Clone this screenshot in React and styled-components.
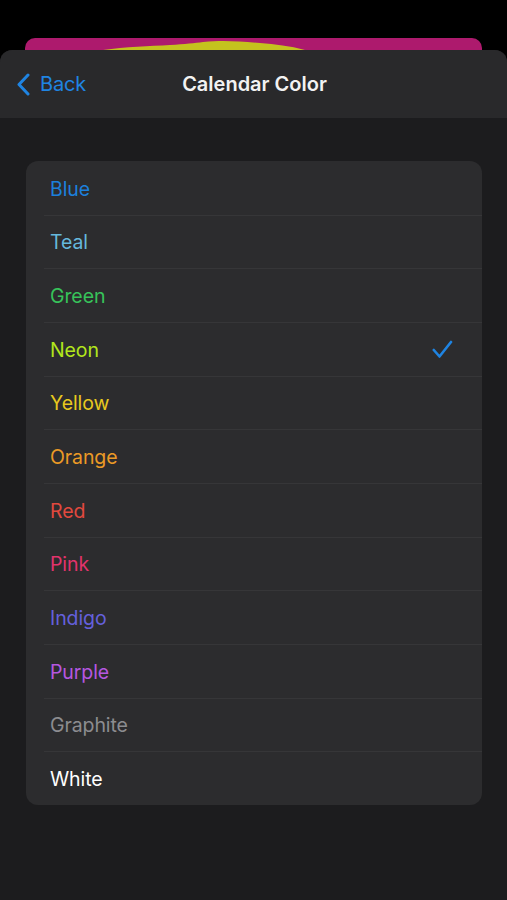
import React from "react";
import styled, { createGlobalStyle } from "styled-components";

const GlobalStyle = createGlobalStyle`
  html, body {
    margin: 0;
    padding: 0;
    background: #000;
  }
  body {
    font-family: Inter, "Noto Sans", "Liberation Sans", sans-serif;
    -webkit-font-smoothing: antialiased;
  }
`;

const colors = [
  { name: "Blue", color: "#1c80dc" },
  { name: "Teal", color: "#66b8dc" },
  { name: "Green", color: "#37c35a" },
  { name: "Neon", color: "#b2e61c", selected: true },
  { name: "Yellow", color: "#e8c81e" },
  { name: "Orange", color: "#eb9a26" },
  { name: "Red", color: "#e2493e" },
  { name: "Pink", color: "#e2336c" },
  { name: "Indigo", color: "#6560dc" },
  { name: "Purple", color: "#b657e0" },
  { name: "Graphite", color: "#8c8c90" },
  { name: "White", color: "#ffffff" },
];

const Screen = styled.div`
  width: 507px;
  height: 900px;
  background: #000;
  padding-top: 38px;
  box-sizing: border-box;
  display: flex;
  flex-direction: column;
  overflow: hidden;
`;

const BackCard = styled.div`
  margin: 0 25px;
  height: 12px;
  background: #ad1a6d;
  border-radius: 10px 10px 0 0;
  overflow: hidden;
  flex-shrink: 0;

  svg {
    display: block;
  }
`;

const Sheet = styled.div`
  flex: 1;
  background: #1c1c1e;
  border-radius: 12px 12px 0 0;
  overflow: hidden;
  display: flex;
  flex-direction: column;
`;

const NavBar = styled.div`
  height: 68px;
  background: #29292b;
  display: grid;
  grid-template-columns: 1fr auto 1fr;
  align-items: center;
  padding: 0 16px;
  flex-shrink: 0;
`;

const BackButton = styled.div`
  display: flex;
  align-items: center;
  gap: 10px;
  color: #1f84e2;
  font-size: 20px;
  letter-spacing: -0.2px;
`;

const Title = styled.div`
  color: #f2f2f2;
  font-size: 20px;
  font-weight: 600;
  letter-spacing: 0;
  padding-left: 2px;
`;

const Content = styled.div`
  padding: 43px 25px 0 26px;
`;

const List = styled.div`
  background: #2c2c2e;
  border-radius: 12px;
  overflow: hidden;
`;

const Row = styled.div`
  height: 53.67px;
  display: flex;
  align-items: center;
  justify-content: space-between;
  padding: 2px 29px 0 24px;
  box-sizing: border-box;
  position: relative;

  & + &::before {
    content: "";
    position: absolute;
    top: 0;
    left: 18px;
    right: 0;
    height: 1px;
    background: #363638;
  }
`;

const Label = styled.span`
  color: ${(p) => p.$color};
  font-size: 19.5px;
  letter-spacing: -0.1px;
`;

const Chevron = () => (
  <svg width="14" height="23" viewBox="0 0 14 23">
    <path
      d="M12 2 L3 11.5 L12 21"
      fill="none"
      stroke="#1f84e2"
      strokeWidth="3"
      strokeLinecap="round"
      strokeLinejoin="round"
    />
  </svg>
);

const Check = () => (
  <svg width="21" height="19" viewBox="0 0 21 19">
    <path
      d="M1.8 10 L7.5 16.5 L19 2"
      fill="none"
      stroke="#1f84e2"
      strokeWidth="2.6"
      strokeLinecap="round"
      strokeLinejoin="round"
    />
  </svg>
);

export default function App() {
  return (
    <>
      <GlobalStyle />
      <Screen>
        <BackCard>
          <svg width="457" height="12" viewBox="0 0 457 12">
            <path
              d="M78 12 C100 9 125 8 145 7 C160 6 170 5 178 4 C186 3 192 3 198 3 C210 3 222 4 235 5 C250 6 265 8 280 12 Z"
              fill="#c4c21e"
            />
          </svg>
        </BackCard>
        <Sheet>
          <NavBar>
            <BackButton>
              <Chevron />
              Back
            </BackButton>
            <Title>Calendar Color</Title>
            <div />
          </NavBar>
          <Content>
            <List>
              {colors.map((c) => (
                <Row key={c.name}>
                  <Label $color={c.color}>{c.name}</Label>
                  {c.selected && <Check />}
                </Row>
              ))}
            </List>
          </Content>
        </Sheet>
      </Screen>
    </>
  );
}
